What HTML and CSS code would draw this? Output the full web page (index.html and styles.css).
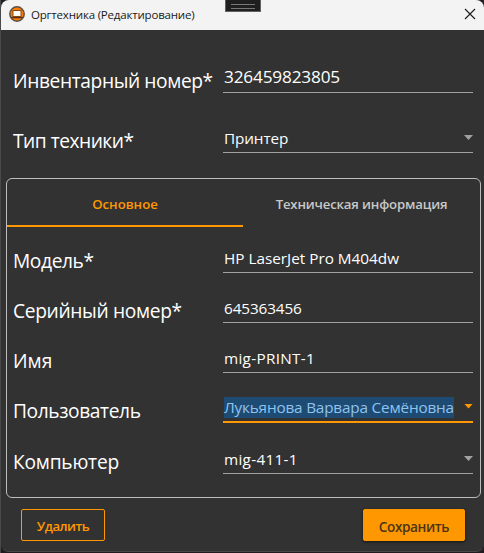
FILE: index.html
```html
<!DOCTYPE html>
<html lang="ru">
<head>
<meta charset="utf-8">
<title>Оргтехника (Редактирование)</title>
<link rel="stylesheet" href="styles.css">
</head>
<body>
<div class="window">
  <header class="titlebar">
    <svg class="app-icon" width="16" height="16" viewBox="0 0 16 16">
      <circle cx="8" cy="8" r="7.2" fill="#ff7a00" stroke="#5b5148" stroke-width="1.5"/>
      <rect x="4" y="4.5" width="8" height="6" fill="#fff" stroke="#8a480e"/>
      <path d="M2.5 11.7h11" stroke="#51301b" stroke-width="1.3"/>
    </svg>
    <span class="title">Оргтехника (Редактирование)</span>
    <svg class="close" width="12" height="12" viewBox="0 0 12 12"><path d="M1 1l10 10M11 1L1 11" stroke="#1b1b1b" stroke-width="1.1"/></svg>
  </header>
  <main class="content">
    <div class="row row-inventory"><span class="label l-inventory">Инвентарный номер*</span><div class="field large"><span class="v-inventory">326459823805</span></div></div>
    <div class="row row-type"><span class="label l-type">Тип техники*</span><div class="field"><span class="v-type">Принтер</span><i class="arrow"></i></div></div>
    <section class="card">
      <nav class="tabs"><span class="tab active"><span class="t-main">Основное</span></span><span class="tab"><span class="t-tech">Техническая информация</span></span></nav>
      <div class="row row-model"><span class="label l-model">Модель*</span><div class="field"><span class="v-model">HP LaserJet Pro M404dw</span></div></div>
      <div class="row row-serial"><span class="label l-serial">Серийный номер*</span><div class="field"><span class="v-serial">645363456</span></div></div>
      <div class="row row-name"><span class="label l-name">Имя</span><div class="field"><span class="v-name">mig-PRINT-1</span></div></div>
      <div class="row row-user"><span class="label l-user">Пользователь</span><div class="field focused"><span class="selected v-user">Лукьянова Варвара Семёновна</span><i class="arrow"></i></div></div>
      <div class="row row-computer"><span class="label l-computer">Компьютер</span><div class="field"><span class="v-computer">mig-411-1</span><i class="arrow"></i></div></div>
    </section>
    <footer class="actions"><button class="button outline"><span class="b-delete">Удалить</span></button><button class="button filled"><span class="b-save">Сохранить</span></button></footer>
  </main>
</div>
<div class="grip"></div>
</body>
</html>
```
FILE: styles.css
```css
* { box-sizing: border-box; }
body {
  margin: 0;
  height: 553px;
  overflow: hidden;
  padding-left: 1px;
  background: linear-gradient(90deg, #49494b 1px, #211c20 1px);
  font-family: "Open Sans", "Noto Sans", sans-serif;
  color: #fff;
}
.window {
  height: 552px;
  border-radius: 8px;
  overflow: hidden;
  background: #323232;
  border-bottom: 1px solid #494949;
}
.titlebar {
  height: 30px;
  display: flex;
  align-items: center;
  padding: 0 8px;
  background: #f3f3f3;
  color: #191919;
}
.app-icon { margin-top: -2px; }
.title {
  margin: -2px 0 0 6px;
  font-size: 11.5px;
  letter-spacing: -0.19px;
  white-space: nowrap;
}
.close { margin-left: auto; margin-top: -2px; }
.grip {
  position: absolute;
  left: 225px;
  top: -1px;
  width: 36px;
  height: 13px;
  background: #1f1f1f;
  border: 1px solid #606060;
}
.grip::before {
  content: "";
  display: block;
  width: 24px;
  height: 3px;
  margin: 4px 0 0 5px;
  border-top: 1px solid #777;
  border-bottom: 1px solid #777;
}
.content { padding-left: 5px; }
.row {
  display: grid;
  grid-template-columns: 210px 250px;
  align-items: end;
  padding-left: 7px;
}
.card .row { padding-left: 6px; }
.row-inventory { height: 63px; }
.row-type { height: 60px; }
.row-model { height: 46px; }
.row-serial, .row-name { height: 50px; }
.row-user { height: 50px; }
.row-computer { height: 51px; }
.label {
  font-size: 19.2px;
  line-height: 26px;
  letter-spacing: -0.4px;
  white-space: nowrap;
  margin-bottom: -1px;
}
.l-name { letter-spacing: 0; }
.l-serial { letter-spacing: -0.34px; }
.l-computer { letter-spacing: -0.22px; }
.l-type { letter-spacing: -0.5px; }
.field {
  display: flex;
  align-items: center;
  justify-content: space-between;
  height: 27px;
  padding: 0 0 1px 1px;
  border-bottom: 1px solid #a1a1a1;
  font-size: 15.3px;
  line-height: 21px;
  white-space: nowrap;
}
.field.large { height: 31px; font-size: 17.2px; }
.v-inventory { letter-spacing: -0.16px; }
.v-type, .v-serial { letter-spacing: -0.12px; }
.v-name, .v-computer { letter-spacing: 0.3px; }
.v-user { letter-spacing: -0.18px; }
.arrow {
  width: 9px;
  height: 5px;
  margin-top: -2px;
  background: #a1a1a1;
  clip-path: polygon(0 0, 100% 0, 50% 100%);
}
.focused { border-bottom: 2px solid #ff9800; height: 29px; }
.focused .arrow { background: #ff9800; }
.selected { background: #1e4b74; color: #8fc4ee; }
.card {
  width: 475px;
  height: 320px;
  margin-top: 25px;
  border: 1px solid #bdbdbd;
  border-radius: 6px;
}
.tabs { display: grid; grid-template-columns: 236px 1fr; height: 48px; }
.tab {
  display: flex;
  align-items: center;
  justify-content: center;
  padding-top: 4px;
  border-bottom: 2px solid transparent;
  font-size: 13.2px;
  font-weight: 600;
  color: #c8c8c8;
  white-space: nowrap;
}
.tab.active { color: #ff9800; border-color: #ff9800; }
.t-tech { letter-spacing: -0.17px; }
.actions { display: flex; justify-content: space-between; padding: 11px 19px 0 15px; }
.button {
  display: flex;
  align-items: center;
  justify-content: center;
  height: 32px;
  padding: 2px 0 0;
  border: 1px solid #ff9800;
  border-radius: 2px;
  font-family: inherit;
  font-size: 13.2px;
  font-weight: 600;
  white-space: nowrap;
}
.outline { width: 84px; background: transparent; color: #ff9800; letter-spacing: -0.5px; }
.filled {
  width: 102px;
  background: #ff9800;
  color: #4c3517;
  font-size: 13.6px;
  letter-spacing: -0.4px;
  box-shadow: 0 1px 3px #151515;
}
```
